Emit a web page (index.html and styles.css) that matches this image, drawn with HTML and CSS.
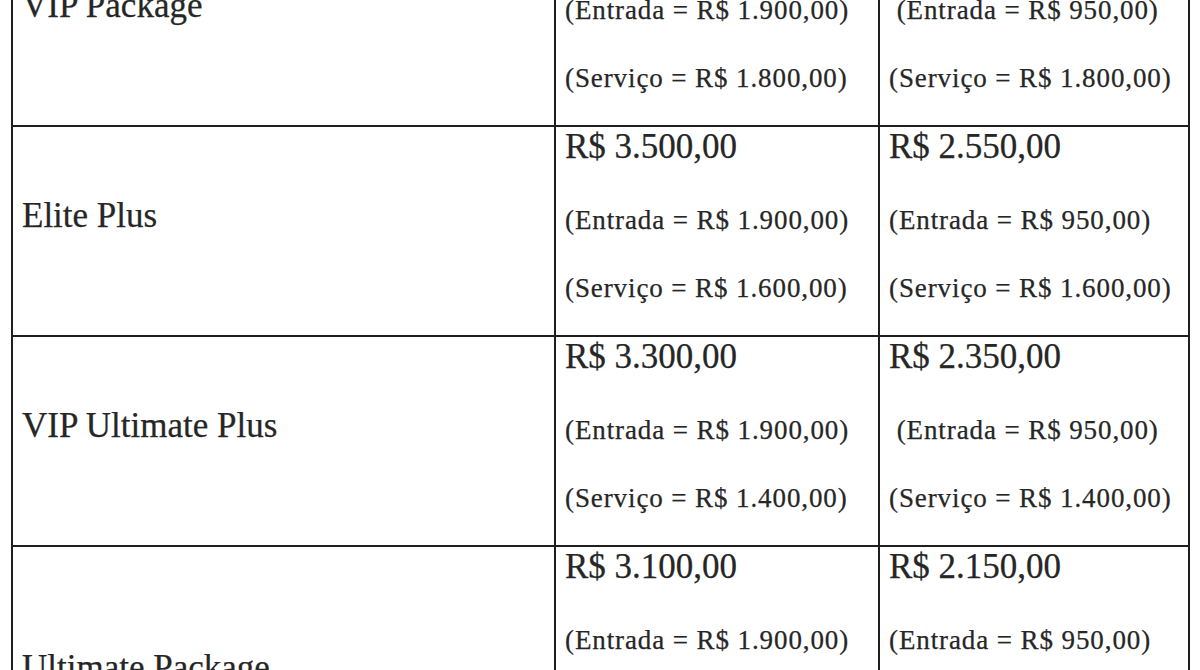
FILE: index.html
```html
<!DOCTYPE html>
<html lang="pt-BR">
<head>
<meta charset="utf-8">
<title>Pacotes</title>
<link rel="stylesheet" href="styles.css">
</head>
<body>
<table class="prices">
  <colgroup>
    <col class="col-name">
    <col class="col-a">
    <col class="col-b">
  </colgroup>
  <tbody>
    <tr>
      <td class="name"><div class="label">VIP Package</div></td>
      <td class="price"><div class="total">R$ 3.700,00</div><div class="part first">(Entrada = R$ 1.900,00)</div><div class="part">(Serviço = R$ 1.800,00)</div></td>
      <td class="price"><div class="total">R$ 2.750,00</div><div class="part first">&nbsp;(Entrada = R$ 950,00)</div><div class="part">(Serviço = R$ 1.800,00)</div></td>
    </tr>
    <tr>
      <td class="name"><div class="label">Elite Plus</div></td>
      <td class="price"><div class="total">R$ 3.500,00</div><div class="part first">(Entrada = R$ 1.900,00)</div><div class="part">(Serviço = R$ 1.600,00)</div></td>
      <td class="price"><div class="total">R$ 2.550,00</div><div class="part first">(Entrada = R$ 950,00)</div><div class="part">(Serviço = R$ 1.600,00)</div></td>
    </tr>
    <tr>
      <td class="name"><div class="label">VIP Ultimate Plus</div></td>
      <td class="price"><div class="total">R$ 3.300,00</div><div class="part first">(Entrada = R$ 1.900,00)</div><div class="part">(Serviço = R$ 1.400,00)</div></td>
      <td class="price"><div class="total">R$ 2.350,00</div><div class="part first">&nbsp;(Entrada = R$ 950,00)</div><div class="part">(Serviço = R$ 1.400,00)</div></td>
    </tr>
    <tr class="tall">
      <td class="name"><div class="label">Ultimate Package</div></td>
      <td class="price"><div class="total">R$ 3.100,00</div><div class="part first">(Entrada = R$ 1.900,00)</div><div class="part">(Serviço = R$ 1.200,00)</div></td>
      <td class="price"><div class="total">R$ 2.150,00</div><div class="part first">(Entrada = R$ 950,00)</div><div class="part">(Serviço = R$ 1.200,00)</div></td>
    </tr>
  </tbody>
</table>
</body>
</html>
```
FILE: styles.css
```css
html, body {
  margin: 0;
  padding: 0;
  background: #ffffff;
  overflow: hidden;
}

body {
  font-family: "Liberation Serif", "Times New Roman", serif;
  color: #262626;
}

.prices {
  margin: -85px 0 0 11px;
  width: 1179px;
  table-layout: fixed;
  border-collapse: separate;
  border-spacing: 2px;
  background: #1f1f1f;
}

.col-name { width: 541px; }
.col-a { width: 322px; }
.col-b { width: 308px; }

.prices tr {
  height: 208px;
}

.prices tr.tall {
  height: 272px;
}

.prices td {
  background: #ffffff;
  padding: 0 9px;
  vertical-align: top;
  white-space: nowrap;
  overflow: hidden;
  -webkit-text-stroke: 0.25px currentColor;
}

.prices td.name {
  vertical-align: middle;
  padding-bottom: 30px;
}

.label {
  font-size: 35px;
  line-height: 40px;
}

.total {
  font-size: 35px;
  line-height: 40px;
}

.part {
  font-size: 27px;
  letter-spacing: 0.9px;
  line-height: 34px;
  margin-top: 34px;
}

.part.first {
  margin-top: 36px;
}
```
